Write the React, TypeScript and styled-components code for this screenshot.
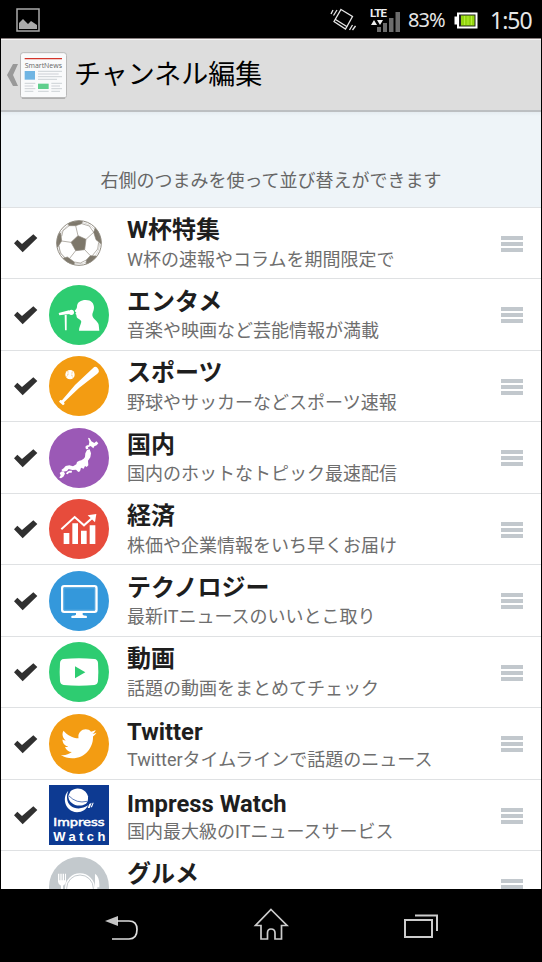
import React from 'react';
import styled, { createGlobalStyle } from 'styled-components';
import { FaTwitter } from 'react-icons/fa';

const GlobalStyle = createGlobalStyle`
  * { box-sizing: border-box; }
  body { margin: 0; background: #000; }
`;

const Screen = styled.div`
  width: 542px;
  height: 962px;
  overflow: hidden;
  background: #000;
  padding: 0 1px;
  display: flex;
  flex-direction: column;
  font-family: Roboto, 'Noto Sans CJK JP', sans-serif;
  svg { display: block; flex: none; }
`;

const StatusBar = styled.div`
  flex: none;
  height: 38px;
  padding: 2px 9px 0 15px;
  display: flex;
  align-items: center;
  color: #e6e6e6;
  font-family: 'Noto Sans', sans-serif;
`;

const Spacer = styled.div`
  flex: 1;
`;

const StatusText = styled.span<{ $size: number; $width: number; $gap: number; $track: number }>`
  width: ${p => p.$width}px;
  margin-left: ${p => p.$gap}px;
  font-size: ${p => p.$size}px;
  letter-spacing: ${p => p.$track}px;
  line-height: 30px;
  white-space: nowrap;
`;

const StatusIcon = styled.span<{ $gap: number }>`
  margin-left: ${p => p.$gap}px;
`;

const Header = styled.header`
  flex: none;
  height: 74px;
  background: #ddd;
  border-top: 1px solid #887f7f;
  border-bottom: 2px solid #bcbfc2;
  box-shadow: inset 0 1px #f6f6f6;
  display: flex;
  align-items: center;
  padding: 1px 0 0 6px;
`;

const AppIcon = styled.div`
  width: 47px;
  height: 47px;
  margin-left: 2px;
`;

const HeaderTitle = styled.h1`
  margin: 0 0 0 7px;
  font-size: 27px;
  line-height: 40px;
  font-weight: 400;
  color: #000;
`;

const Hint = styled.div`
  flex: none;
  height: 94.7px;
  padding-top: 54px;
  background: linear-gradient(#e5ecf1, #eef4f8 4px);
  text-align: center;
  font-size: 18px;
  line-height: 30px;
  color: #666;
`;

const List = styled.div`
  flex: none;
  height: 682.3px;
  overflow: hidden;
  background: #fff;
`;

const Row = styled.div`
  height: 71.5px;
  border-top: 1px solid #dfe1e3;
  display: flex;
  align-items: flex-start;
  padding-left: 12px;
`;

const Check = styled.div`
  width: 25px;
  margin-top: 25.5px;
`;

const IconSlot = styled.div`
  width: 60px;
  margin: 5.4px 0 0 11px;
`;

const Texts = styled.div`
  flex: 1;
  padding: 8.5px 0 0 18px;
  white-space: nowrap;
`;

const Title = styled.div<{ $latin: boolean }>`
  height: 28.5px;
  padding-top: ${p => (p.$latin ? 1.5 : 0)}px;
  font-size: ${p => (p.$latin ? 23.8 : 24)}px;
  line-height: 29px;
  font-weight: 700;
  color: #1e1e1e;
`;

const Subtitle = styled.div`
  font-size: 18px;
  line-height: 29px;
  font-weight: 400;
  color: #6e6e6e;
`;

const Grip = styled.div`
  width: 22px;
  margin: 28px 18px 0 0;
  display: flex;
  flex-direction: column;
  gap: 2px;
`;

const GripBar = styled.div`
  height: 4px;
  background: #c2c8cd;
`;

const NavBar = styled.nav`
  flex: none;
  height: 73px;
  display: flex;
  justify-content: space-between;
  align-items: center;
  padding: 0 102px 0 101px;
`;

const Disc = ({ color, children }: { color: string; children: React.ReactNode }) => (
  <svg width="60" height="60" viewBox="0 0 180 180" fill="#fff">
    <circle cx="90" cy="90" r="90" fill={color} />
    {children}
  </svg>
);

const Soccer = () => (
  <svg width="60" height="60" viewBox="0 0 180 180" fill="#7d776a" stroke="#8f8a7f" strokeWidth="2">
    <clipPath id="ball"><circle cx="90" cy="90" r="67" /></clipPath>
    <g clipPath="url(#ball)">
      <path d="M87 68 111 79 107 110 80 113 66 88Z" />
      <path d="M56 28 76 20H102L98 32 80 38 60 38Z" />
      <path d="M140 40 134 58 141 80 156 92 165 75Z" />
      <path d="M152 130 124 128 112 141 111 160 135 158Z" />
      <path d="M75 162 76 147 55 132 42 136 45 155Z" />
      <path d="M17 108 27 101 38 84 35 60 20 66Z" />
      <path fill="none" d="M87 68 80 38M111 79 134 58M107 110 124 128M80 113 62 136M66 88 38 84M98 32 121 39 134 58M149 88 146 108 130 128M112 141 94 150 76 147M48 134 34 120 30 98M38 70 42 53 62 37" />
    </g>
    <circle cx="90" cy="90" r="67" fill="none" strokeWidth="3" />
    <circle cx="90" cy="90" r="62" fill="none" strokeWidth="1" />
  </svg>
);

const Singer = () => (
  <Disc color="#2ecc71">
    <circle cx="67" cy="82" r="8" />
    <path d="M29 84 60 76 62 87 31 91ZM47 90H53V136H48Z" />
    <path d="M84 66C84 51 96 45 110 45C127 45 135 55 135 68C135 78 129 84 130 91C132 103 146 108 149 119L151 137H90C90 127 95 119 97 110C95 101 84 101 83 95L82 89 79 86 82 83 77 78C80 74 83 72 84 66Z" />
  </Disc>
);

const Baseball = () => (
  <Disc color="#f39c12">
    <circle cx="63" cy="56" r="14" />
    <path d="M56 44Q60 57 51 63M70 47Q66 59 73 66" fill="none" stroke="#f39c12" strokeWidth="2" strokeDasharray="3 2" />
    <path d="M133 35Q139 30 145 35L149 41Q152 47 145 53L90 96 45 139 47 144 42 148 30 137 34 132 39 133 78 87Z" />
  </Disc>
);

const Japan = () => (
  <Disc color="#9b59b6">
    <path d="M117 29 122 31 127 40 136 45 142 40 148 46 143 52 136 55 133 61 125 54 117 58 118 63 111 64 109 56 114 52 119 52 121 42Z" />
    <path d="M114 66 122 64 126 76 124 88 117 98 118 112 113 117 108 114 104 122 96 119 93 130 88 132 81 125 70 126 59 123 54 129 42 131 37 126 44 121 50 114 61 112 72 115 82 109 84 102 91 98 97 97 104 92 108 87 109 76Z" />
    <path d="M32 135 39 130 45 132 48 137 43 146 36 151 31 149 35 142ZM54 132 61 128 69 128 68 134 60 134 56 139 51 137Z" />
  </Disc>
);

const Chart = () => (
  <Disc color="#e74c3c">
    <path d="M44 102H61V135H44ZM70 73H87V135H70ZM96 95H113V135H96ZM122 79H139V135H122Z" />
    <path d="M37 91 77 54 105 79 132 55" fill="none" stroke="#fff" strokeWidth="6" />
    <path d="M116 49 142 45 138 70Z" />
  </Disc>
);

const Monitor = () => (
  <Disc color="#3498db">
    <rect x="39.5" y="45.5" width="103" height="77" rx="6" fill="none" stroke="#fff" strokeWidth="7" />
    <rect x="45" y="51" width="92" height="66" fill="none" stroke="#5fade2" strokeWidth="2" />
    <path d="M81 124H101V131Q103 134 112 134Q116 137 113 141H68Q64 137 69 134Q79 134 81 131Z" />
  </Disc>
);

const Video = () => (
  <Disc color="#2ecc71">
    <path d="M44 51Q90 47 136 51Q146 52 147 63Q149 90 147 117Q146 128 136 129Q90 133 44 129Q34 128 33 117Q31 90 33 63Q34 52 44 51Z" />
    <path d="M78 73 109 91 78 109Z" fill="#2ecc71" />
  </Disc>
);

const Bird = () => (
  <Disc color="#f39c12">
    <FaTwitter x="36" y="36" size={107} color="#fff" fill="#fff" />
  </Disc>
);

const Impress = () => (
  <svg width="60" height="60" viewBox="0 0 180 180" fill="#fff">
    <rect width="180" height="180" fill="#0d3a92" />
    <path d="M58 18C39 34 45 79 84 82C101 82 112 73 117 61C94 78 55 72 54 38C54 29 56 23 58 18Z" />
    <path d="M65 18C84 2 112 12 117 34C118 45 115 53 111 56C88 70 57 56 58 32Z" />
    <path d="M59 32Q83 57 114 49" fill="none" stroke="#0d3a92" strokeWidth="2" />
    <path d="M121 57 128 53 122 69H116ZM131 53H134L129 67H125Z" />
    <text x="13" y="123" fontFamily="DejaVu Sans" fontSize="29" stroke="#fff" strokeWidth="1.5" textLength="154" lengthAdjust="spacingAndGlyphs">Impress</text>
    <text x="13" y="168" fontFamily="Liberation Sans" fontSize="39" fontWeight="bold" textLength="156" lengthAdjust="spacing">Watch</text>
  </svg>
);

const Plate = () => (
  <Disc color="#c3c9cd">
    <circle cx="93" cy="94" r="45" />
    <circle cx="93" cy="94" r="40" fill="none" stroke="#c3c9cd" strokeWidth="3" />
    <path d="M27 50H31V70H34V50H38V70H41V50H45V70H48V50H51V74Q50 83 42 86V150H36V86Q28 83 27 74ZM138 150V50Q153 60 151 91H145V150Z" />
  </Disc>
);

const CheckIcon = () => (
  <svg width="25" height="20" viewBox="0 0 75 60">
    <path d="M3 31 13 20 27 33 61 4 73 15 29 58Z" fill="#303030" />
  </svg>
);

const SmartNewsIcon = () => (
  <svg width="47" height="47" viewBox="0 0 141 141">
    <rect x="1.5" y="2" width="138" height="137" rx="8" fill="#f9fafb" stroke="#b9b9b9" strokeWidth="3" />
    <path d="M6 138H135" stroke="#aaa" strokeWidth="4" />
    <path d="M14 20H126" stroke="#d3352b" strokeWidth="4" />
    <text x="14" y="47" fontFamily="Open Sans" fontSize="22" fill="#666" textLength="112" lengthAdjust="spacingAndGlyphs">SmartNews</text>
    <path fill="#70b5e3" d="M14 57H45V83H14Z" />
    <path fill="#5fcf8d" d="M54 95H86V111H54Z" />
    <path fill="none" stroke="#b7bdc2" strokeWidth="2" d="M54 58H126M54 66H116M54 74H126M54 82H111M14 94H46M14 102H40M14 110H46M14 118H40M54 118H86M94 94H126M94 102H120M94 110H126M94 118H120" />
  </svg>
);

const channels = [
  { icon: <Soccer />, title: 'W杯特集', sub: 'W杯の速報やコラムを期間限定で' },
  { icon: <Singer />, title: 'エンタメ', sub: '音楽や映画など芸能情報が満載' },
  { icon: <Baseball />, title: 'スポーツ', sub: '野球やサッカーなどスポーツ速報' },
  { icon: <Japan />, title: '国内', sub: '国内のホットなトピック最速配信' },
  { icon: <Chart />, title: '経済', sub: '株価や企業情報をいち早くお届け' },
  { icon: <Monitor />, title: 'テクノロジー', sub: '最新ITニュースのいいとこ取り' },
  { icon: <Video />, title: '動画', sub: '話題の動画をまとめてチェック' },
  { icon: <Bird />, title: 'Twitter', sub: 'Twitterタイムラインで話題のニュース', latin: true },
  { icon: <Impress />, title: 'Impress Watch', sub: '国内最大級のITニュースサービス', latin: true },
  { icon: <Plate />, title: 'グルメ', sub: '', unchecked: true },
];

export default function App() {
  return (
    <Screen lang="ja">
      <GlobalStyle />
      <StatusBar>
        <svg width="24" height="24" viewBox="0 0 24 24">
          <rect x="1" y="1" width="22" height="22" fill="none" stroke="#aaa" strokeWidth="1.5" />
          <path d="M3 21V15L7 11 12 16 15 13 21 17V21Z" fill="#aaa" />
        </svg>
        <Spacer />
        <svg width="26" height="24" viewBox="0 0 26 24" fill="none" stroke="#e6e6e6" strokeWidth="1.3">
          <path d="M11 1.5 22.5 8.5 15.5 21 4 13.5ZM5.5 11.5 17.5 19M1 6 3 2M3.5 7.500 7 2M19.500 22 22.500 17M22.500 22 25.500 18" />
        </svg>
        <StatusIcon $gap={14}>
          <svg width="31" height="26" viewBox="0 0 31 26">
            <text x="0" y="10" fontFamily="Roboto" fontWeight="bold" fontSize="11.5" fill="#eee" textLength="17">LTE</text>
            <path d="M1 18 4 13 7 18ZM7 13H13L10 18Z" fill="#eee" />
            <path d="M7 20H11V25H7ZM13 16H17V25H13ZM19 11H23.500V25H19ZM25.500 5H30V25H25.500Z" fill="#6c6c6c" />
          </svg>
        </StatusIcon>
        <StatusText $size={20} $width={40} $gap={7} $track={-0.9}>83%</StatusText>
        <StatusIcon $gap={6}>
          <svg width="24" height="17" viewBox="0 0 24 17">
            <path d="M3 .5H23.500V16.500H3V12.500H.5V4.500H3Z" fill="#fff" />
            <rect x="5" y="2.500" width="16.500" height="12" fill="#222" />
            <rect x="7" y="3.500" width="13.500" height="10" fill="#93d50f" />
            <path d="M10.500 4V13M14 4V13M17.500 4V13" stroke="#b5ec35" />
          </svg>
        </StatusIcon>
        <StatusText $size={23} $width={42} $gap={12} $track={-1}>1:50</StatusText>
      </StatusBar>
      <Header>
        <svg width="11" height="22" viewBox="0 0 11 22">
          <path d="M6 0H11L6 11 11 22H6L0 11Z" fill="#999" />
        </svg>
        <AppIcon><SmartNewsIcon /></AppIcon>
        <HeaderTitle>チャンネル編集</HeaderTitle>
      </Header>
      <Hint>右側のつまみを使って並び替えができます</Hint>
      <List>
        {channels.map(c => (
          <Row key={c.title}>
            <Check>{!c.unchecked && <CheckIcon />}</Check>
            <IconSlot>{c.icon}</IconSlot>
            <Texts>
              <Title $latin={!!c.latin}>{c.title}</Title>
              <Subtitle>{c.sub}</Subtitle>
            </Texts>
            <Grip><GripBar /><GripBar /><GripBar /></Grip>
          </Row>
        ))}
      </List>
      <NavBar>
        <svg width="36" height="32" viewBox="0 0 36 32">
          <path d="M3 12 16 7V17Z" fill="#c4c4c4" />
          <path d="M15 12H27Q35 12 35 20.500Q35 30 27 30H10" fill="none" stroke="#ddd" strokeWidth="1.7" />
        </svg>
        <svg width="36" height="36" viewBox="0 0 36 36" fill="none" stroke="#ccc" strokeWidth="1.7">
          <path d="M18 2.500 34 18.500H28.500V32H22V26Q22 22 18 22Q14.500 22 14.500 26V32H8V18.500H2.500Z" />
        </svg>
        <svg width="36" height="28" viewBox="0 0 36 28" fill="none" stroke="#ccc" strokeWidth="2">
          <path d="M2 9H29V26H2ZM12 4.500H34V20" />
        </svg>
      </NavBar>
    </Screen>
  );
}
